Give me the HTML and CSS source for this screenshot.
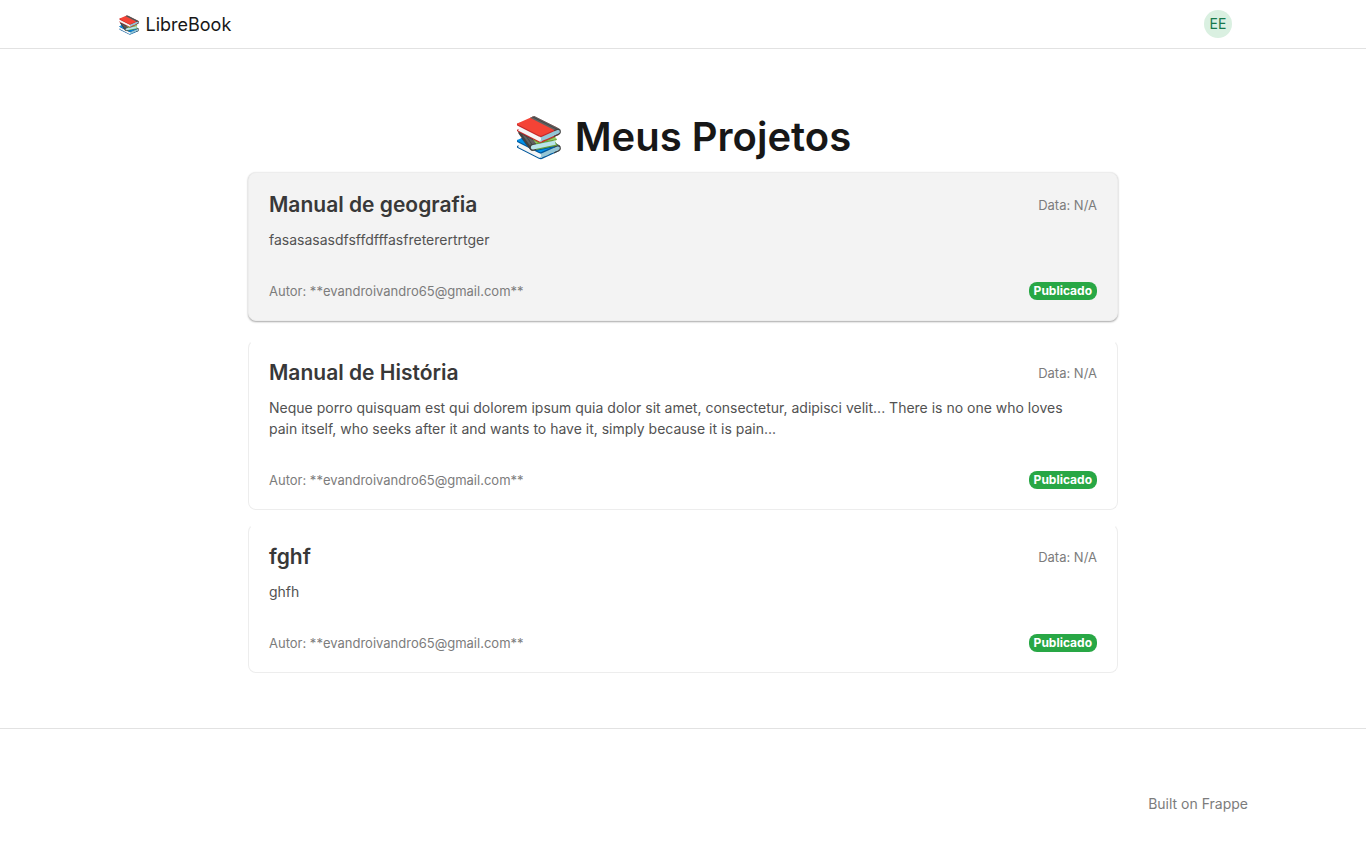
FILE: index.html
```html
<!DOCTYPE html>
<html lang="pt">
<head>
<meta charset="utf-8">
<meta name="viewport" content="width=device-width, initial-scale=1">
<title>Meus Projetos</title>
<link rel="stylesheet" href="styles.css">
</head>
<body>
<header class="navbar">
  <div class="navbar-inner">
    <a class="brand" href="#"><span class="emoji">📚</span> LibreBook</a>
    <button class="avatar" type="button" aria-label="Conta de EE">EE</button>
  </div>
</header>
<main class="content">
  <h1 class="page-title"><span class="emoji">📚</span> Meus Projetos</h1>
  <article class="card card-active">
    <div class="card-row"><h2 class="card-title">Manual de geografia</h2><span class="meta">Data: N/A</span></div>
    <p class="description">fasasasasdfsffdfffasfreterertrtger</p>
    <div class="card-row"><span class="meta">Autor: **evandroivandro65@gmail.com**</span><span class="badge">Publicado</span></div>
  </article>
  <article class="card">
    <div class="card-row"><h2 class="card-title">Manual de História</h2><span class="meta">Data: N/A</span></div>
    <p class="description">Neque porro quisquam est qui dolorem ipsum quia dolor sit amet, consectetur, adipisci velit... There is no one who loves pain itself, who seeks after it and wants to have it, simply because it is pain...</p>
    <div class="card-row"><span class="meta">Autor: **evandroivandro65@gmail.com**</span><span class="badge">Publicado</span></div>
  </article>
  <article class="card">
    <div class="card-row"><h2 class="card-title">fghf</h2><span class="meta">Data: N/A</span></div>
    <p class="description">ghfh</p>
    <div class="card-row"><span class="meta">Autor: **evandroivandro65@gmail.com**</span><span class="badge">Publicado</span></div>
  </article>
</main>
<footer class="footer">
  <div class="footer-inner"><a class="footer-link" href="#">Built on Frappe</a></div>
</footer>
</body>
</html>
```
FILE: styles.css
```css
* { box-sizing: border-box; }
body {
  margin: 0;
  background: #fff;
  color: #171717;
  font-family: Inter, "Noto Color Emoji", sans-serif;
  font-size: 14px;
  line-height: 21px;
}
h1, h2, p { margin: 0; }
.navbar { border-bottom: 1px solid #e2e2e2; }
.navbar-inner {
  display: flex;
  align-items: center;
  justify-content: space-between;
  max-width: 1140px;
  height: 48px;
  margin: 0 auto;
  padding: 0 21px 0 5px;
}
.brand { color: #171717; font-size: 18px; line-height: 27px; text-decoration: none; }
.avatar {
  width: 28px;
  height: 28px;
  padding: 0;
  border: 0;
  border-radius: 50%;
  background: #daf0e1;
  color: #16794c;
  font: 14px/28px Inter, sans-serif;
}
.content { max-width: 900px; margin: 0 auto; padding: 64px 15px 55px; }
.page-title {
  font-size: 40px;
  font-weight: 600;
  line-height: 48px;
  margin-bottom: 11px;
  text-align: center;
}
.card {
  margin-bottom: 14px;
  padding: 20px 20px 19px;
  border: 1px solid #ededed;
  border-top-color: #fff;
  border-radius: 8px;
}
.card:last-child { margin-bottom: 0; }
.card-active {
  margin-bottom: 19px;
  border-color: #ededed;
  background: #f3f3f3;
  box-shadow: 0 1px 2px rgba(0, 0, 0, .35);
}
.card-row { display: flex; align-items: center; justify-content: space-between; }
.card-title { color: #383838; font-size: 21px; font-weight: 600; line-height: 24px; }
.description { margin: 12px 0 31px; padding-right: 8px; color: #525252; }
.meta { color: #7c7c7c; font-size: 13px; line-height: 20px; }
.badge {
  padding: 3px 5px;
  border-radius: 8px;
  background: #28a745;
  color: #fff;
  font-size: 12px;
  font-weight: 700;
  line-height: 12px;
}
.footer { border-top: 1px solid #e2e2e2; }
.footer-inner {
  display: flex;
  justify-content: flex-end;
  max-width: 1140px;
  margin: 0 auto;
  padding: 64px 5px 53px;
}
.footer-link { color: #7c7c7c; text-decoration: none; }
```
